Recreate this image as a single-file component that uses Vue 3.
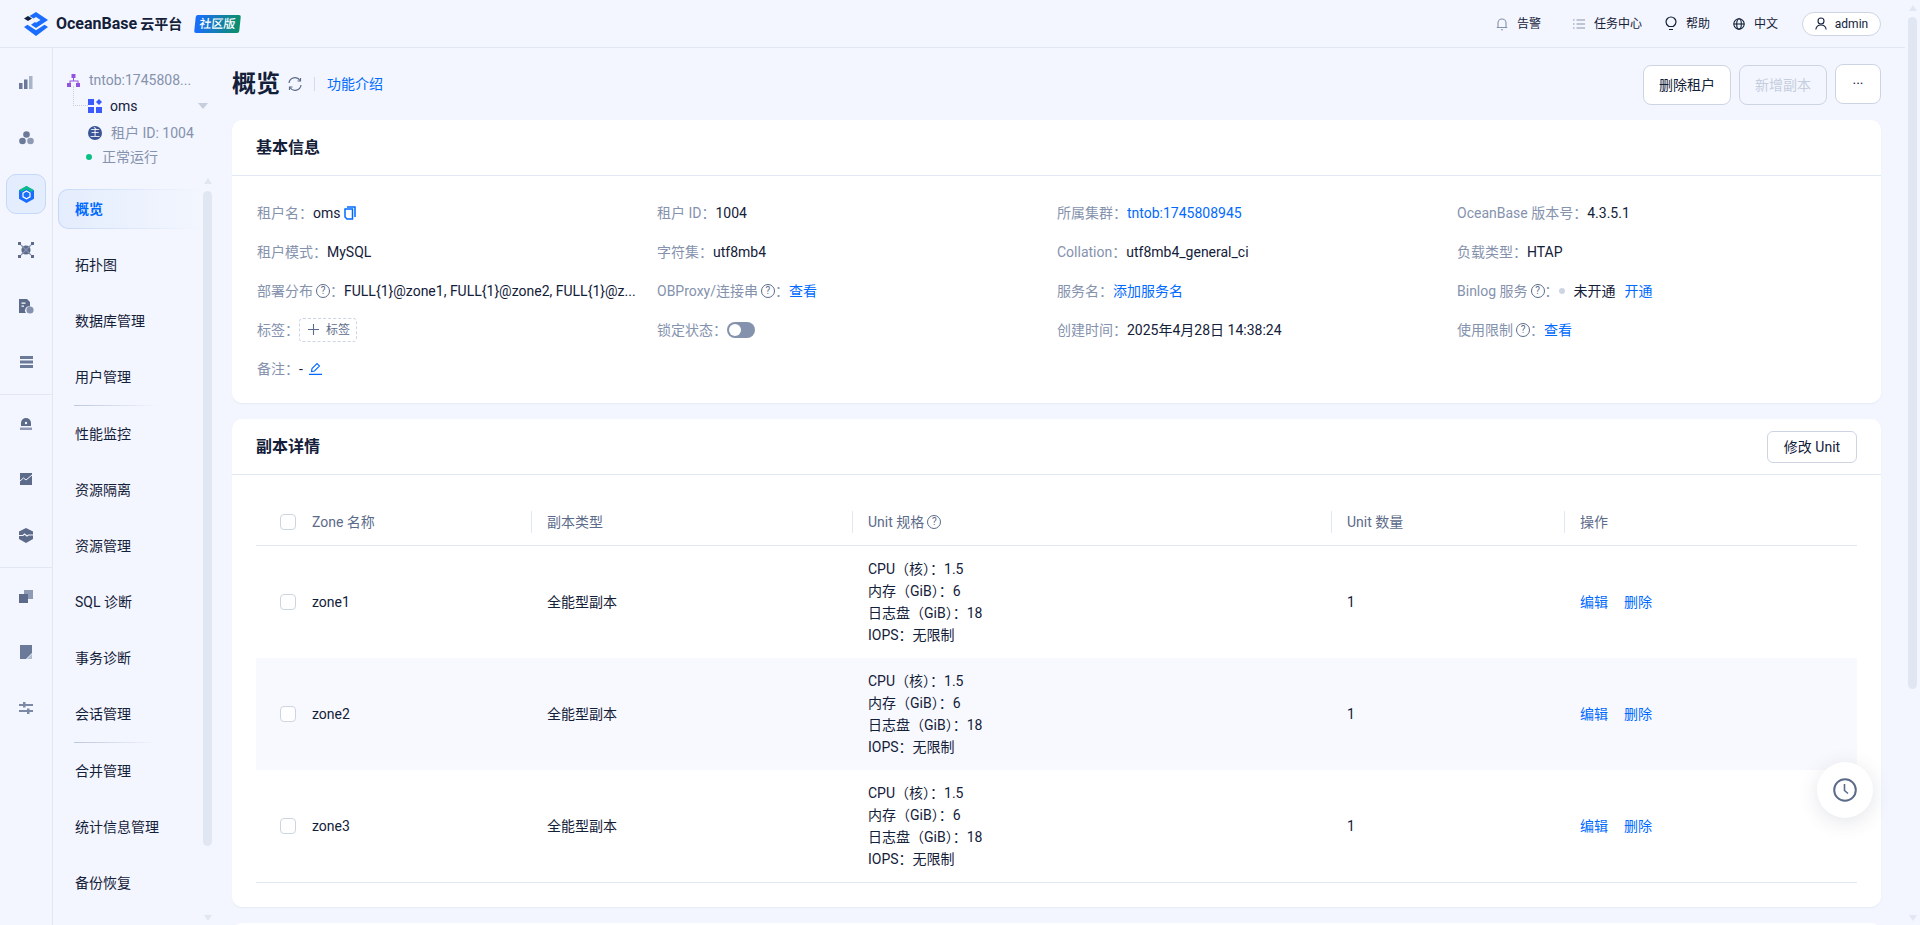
<template>
  <div class="page">
    <div class="shell">
      <header class="topbar">
        <div class="brand">
          <svg class="logo" width="24" height="24" viewBox="0 0 24 24">
            <path d="M12 0l12 8-12 8-5-3.300 4-2.700 1 .7L16.500 8 12 5 9.500 6.600 5.500 4z" fill="#1a6dff" />
            <path d="M0 6.500L4 4l4 2.500L4 9z" fill="#132039" />
            <path d="M0 15l3.500-2.200L12 18.300l8.500-5.500L24 15 12 24z" fill="#1a6dff" />
          </svg>
          <span class="brand-name">OceanBase<span class="brand-cn">云平台</span></span>
          <span class="edition">社区版</span>
        </div>
        <nav class="top-nav">
          <span class="top-item alarm">
            <svg width="12" height="14" viewBox="0 0 12 14" fill="none" stroke="#8592ad" stroke-width="1.100"><path d="M2 10.500V6a4 4 0 018 0v4.500zM.8 10.500h10.400M5 12.800h2" /></svg>
            告警
          </span>
          <span class="top-item tasks">
            <svg width="12" height="12" viewBox="0 0 12 12" stroke="#8592ad" stroke-width="1.100"><path d="M3.500 2H12M3.500 6H12M3.500 10H12M0 2h1.500M0 6h1.500M0 10h1.500" /></svg>
            任务中心
          </span>
          <span class="top-item help">
            <svg width="12" height="15" viewBox="0 0 12 15" fill="none" stroke="#132039" stroke-width="1.200"><path d="M3.800 10.500C2.500 9.500 1 8.200 1 6a5 5 0 0110 0c0 2.200-1.500 3.500-2.800 4.500zM4 13.500h4" /></svg>
            帮助
          </span>
          <span class="top-item lang">
            <svg width="12" height="12" viewBox="0 0 12 12" fill="none" stroke="#132039" stroke-width="1.100"><circle cx="6" cy="6" r="5.200" /><ellipse cx="6" cy="6" rx="2.300" ry="5.200" /><path d="M.8 6h10.400" /></svg>
            中文
          </span>
          <span class="user">
            <svg width="12" height="13" viewBox="0 0 12 13" fill="none" stroke="#132039" stroke-width="1.100"><circle cx="6" cy="4" r="3" /><path d="M.8 12.500C1.300 9.500 3.300 8 6 8s4.700 1.500 5.200 4.500" /></svg>
            admin
          </span>
        </nav>
      </header>

      <div class="body">
        <aside class="rail">
          <div class="rail-group">
            <span class="rail-icon">
              <svg width="14" height="13" viewBox="0 0 14 13"><rect x="0" y="7" width="3.500" height="6" fill="#6b7a99" /><rect x="5" y="3.500" width="3.500" height="9.500" fill="#6b7a99" /><rect x="10" y="0" width="3.500" height="13" fill="#aab4c8" /></svg>
            </span>
            <span class="rail-icon">
              <svg width="15" height="14" viewBox="0 0 15 14"><circle cx="7.500" cy="3.500" r="3.300" fill="#6b7a99" /><circle cx="3.500" cy="10" r="3.300" fill="#6b7a99" /><circle cx="11.500" cy="10" r="3.300" fill="#8f9bb5" /></svg>
            </span>
            <span class="rail-icon active">
              <svg width="15" height="17" viewBox="0 0 15 17"><path d="M7.500 0L15 4.200v8.500L7.500 17 0 12.700V4.200z" fill="#1a6dff" /><path d="M7.500 0L15 4.200l-2.500 1.500-5-2.800-5 2.800L0 4.200z" fill="#0ac185" /><path d="M7.500 5l3.500 2v3.800L7.500 12.800 4 10.800V7z" fill="none" stroke="#fff" stroke-width="1.200" /></svg>
            </span>
            <span class="rail-icon">
              <svg width="16" height="16" viewBox="0 0 16 16"><circle cx="8" cy="8" r="4.600" fill="#5c6b8a" /><path d="M3 3l10 10M13 3L3 13" stroke="#8592ad" stroke-width="1.200" /><g fill="#5c6b8a"><rect x="0" y="0" width="3" height="3" /><rect x="13" y="0" width="3" height="3" /><rect x="0" y="13" width="3" height="3" /><rect x="13" y="13" width="3" height="3" /></g></svg>
            </span>
            <span class="rail-icon">
              <svg width="15" height="15" viewBox="0 0 15 15"><path d="M0 0h8l3 3v4.500a4 4 0 00-4 6.500H0z" fill="#5c6b8a" /><rect x="2.500" y="3.500" width="4" height="1.300" fill="#f3f6fe" /><rect x="2.500" y="6.500" width="2.500" height="1.300" fill="#f3f6fe" /><circle cx="11" cy="11" r="3.600" fill="#8592ad" /></svg>
            </span>
            <span class="rail-icon">
              <svg width="13" height="12" viewBox="0 0 13 12"><rect width="13" height="3" fill="#6b7a99" /><rect y="4.500" width="13" height="3" fill="#6b7a99" /><rect y="9" width="13" height="3" fill="#6b7a99" /></svg>
            </span>
          </div>
          <div class="rail-group">
            <span class="rail-icon">
              <svg width="12" height="13" viewBox="0 0 12 13"><path d="M1 9V6a5 5 0 0110 0v3z" fill="#5c6b8a" /><circle cx="6" cy="6" r="1.200" fill="#f3f6fe" /><rect y="10.500" width="12" height="2.500" fill="#8f9bb5" /></svg>
            </span>
            <span class="rail-icon">
              <svg width="12" height="12" viewBox="0 0 12 12"><rect width="12" height="12" fill="#5c6b8a" /><path d="M0 8l3.500-3 2.500 2L12 2" fill="none" stroke="#f3f6fe" stroke-width="1" /></svg>
            </span>
            <span class="rail-icon">
              <svg width="14" height="15" viewBox="0 0 14 15"><path d="M7 0l7 3.500v7.500L7 15l-7-4V3.500z" fill="#5c6b8a" /><path d="M0 7.500h4l1.500-1.500 2.500 2 1.500-1h4.500" fill="none" stroke="#f3f6fe" stroke-width="1.100" /></svg>
            </span>
          </div>
          <div class="rail-group">
            <span class="rail-icon">
              <svg width="14" height="13" viewBox="0 0 14 13"><rect x="5" y="0" width="9" height="9" fill="#8f9bb5" /><rect x="0" y="4" width="9" height="9" fill="#5c6b8a" /></svg>
            </span>
            <span class="rail-icon">
              <svg width="12" height="14" viewBox="0 0 12 14"><path d="M0 0h12v8l-6 6H0z" fill="#6b7a99" /><path d="M12 9v5H7z" fill="#b4bdd0" /></svg>
            </span>
            <span class="rail-icon">
              <svg width="14" height="12" viewBox="0 0 14 12"><g fill="#7b89a6"><rect y="2" width="14" height="2" /><rect y="8" width="14" height="2" /><rect x="4" y="0" width="2.500" height="5.500" /><rect x="8" y="6.500" width="2.500" height="5.500" /></g></svg>
            </span>
          </div>
        </aside>

        <aside class="side">
          <div class="tenant">
            <div class="tenant-line cluster">
              <svg width="13" height="13" viewBox="0 0 13 13" fill="#9254de"><rect x="4.500" y="0" width="4" height="4" /><rect x="0" y="9" width="4" height="4" /><rect x="9" y="9" width="4" height="4" /><path d="M6 4h1v2.500h4.500V9h-1V7.500h-7V9h-1V6.500H6z" /></svg>
              <span>tntob:1745808...</span>
            </div>
            <div class="tenant-line name">
              <span class="dotted"></span>
              <svg width="14" height="14" viewBox="0 0 14 14" fill="#3b5bfd"><rect width="6" height="6" /><path d="M11 0l3 3-3 3-3-3z" /><rect y="8" width="6" height="6" /><rect x="8" y="8" width="6" height="6" /></svg>
              <span class="tenant-name">oms</span>
              <i class="caret"></i>
            </div>
            <div class="tenant-line tenant-id">
              <span class="mode-badge">主</span>
              <span>租户 ID: 1004</span>
            </div>
            <div class="tenant-line status">
              <i class="dot"></i>
              <span>正常运行</span>
            </div>
          </div>
          <div class="menu-wrap">
            <ul class="menu">
              <template v-for="item in menu" :key="item.label">
                <li class="menu-item" :class="{ active: item.active }">{{ item.label }}</li>
                <li v-if="item.divider" class="menu-divider"></li>
              </template>
            </ul>
            <div class="menu-scroll">
              <i class="arrow up"></i>
              <div class="thumb"></div>
              <i class="arrow down"></i>
            </div>
          </div>
        </aside>

        <main class="main">
          <div class="title-row">
            <h1>概览</h1>
            <svg class="refresh" width="14" height="14" viewBox="0 0 14 14" fill="none" stroke="#5c6b8a" stroke-width="1.200"><path d="M1 6a6 6 0 0111-2.500M13 8A6 6 0 012 10.500" /><path d="M12.500 1v3h-3M1.500 13v-3h3" /></svg>
            <i class="title-sep"></i>
            <a class="link intro">功能介绍</a>
            <div class="actions">
              <button class="btn">删除租户</button>
              <button class="btn disabled">新增副本</button>
              <button class="btn more">···</button>
            </div>
          </div>

          <section class="card">
            <div class="card-head"><h2>基本信息</h2></div>
            <div class="info">
              <div class="info-item"><span class="k">租户名：</span><span class="v">oms</span>
                <svg class="copy" width="12" height="14" viewBox="0 0 12 14" fill="none" stroke="#006aff" stroke-width="1.500"><path d="M3 1h8v10M1 3h7.500v10H3l-2-2z" /></svg>
              </div>
              <div class="info-item"><span class="k">租户 ID：</span><span class="v">1004</span></div>
              <div class="info-item"><span class="k">所属集群：</span><a class="link">tntob:1745808945</a></div>
              <div class="info-item"><span class="k">OceanBase 版本号：</span><span class="v">4.3.5.1</span></div>

              <div class="info-item"><span class="k">租户模式：</span><span class="v">MySQL</span></div>
              <div class="info-item"><span class="k">字符集：</span><span class="v">utf8mb4</span></div>
              <div class="info-item"><span class="k">Collation：</span><span class="v">utf8mb4_general_ci</span></div>
              <div class="info-item"><span class="k">负载类型：</span><span class="v">HTAP</span></div>

              <div class="info-item"><span class="k">部署分布<i class="q">?</i>：</span><span class="v">FULL{1}@zone1, FULL{1}@zone2, FULL{1}@z...</span></div>
              <div class="info-item"><span class="k">OBProxy/连接串<i class="q">?</i>：</span><a class="link">查看</a></div>
              <div class="info-item"><span class="k">服务名：</span><a class="link">添加服务名</a></div>
              <div class="info-item"><span class="k">Binlog 服务<i class="q">?</i>：</span><i class="grey-dot"></i><span class="v">未开通</span><a class="link open">开通</a></div>

              <div class="info-item"><span class="k">标签：</span>
                <span class="tag-add">
                  <svg width="11" height="11" viewBox="0 0 11 11" stroke="#5c6b8a" stroke-width="1.100"><path d="M5.500 0v11M0 5.500h11" /></svg>
                  标签
                </span>
              </div>
              <div class="info-item"><span class="k">锁定状态：</span><span class="switch"><i></i></span></div>
              <div class="info-item"><span class="k">创建时间：</span><span class="v">2025年4月28日 14:38:24</span></div>
              <div class="info-item"><span class="k">使用限制<i class="q">?</i>：</span><a class="link">查看</a></div>

              <div class="info-item"><span class="k">备注：</span><span class="v">-</span>
                <svg class="edit" width="13" height="13" viewBox="0 0 13 13" fill="none" stroke="#006aff" stroke-width="1.100"><path d="M2.500 9.500l.5-3L8 1.500l2.500 2.500-5 5zM0 12.400h13" /></svg>
              </div>
            </div>
          </section>

          <section class="card">
            <div class="card-head">
              <h2>副本详情</h2>
              <button class="btn small">修改 Unit</button>
            </div>
            <div class="table-wrap">
              <div class="tr thead">
                <div class="td check"><i class="box"></i></div>
                <div class="td">Zone 名称</div>
                <div class="td sep">副本类型</div>
                <div class="td sep">Unit 规格<i class="q">?</i></div>
                <div class="td sep">Unit 数量</div>
                <div class="td sep">操作</div>
              </div>
              <div v-for="(zone, i) in zones" :key="zone" class="tr row" :class="{ stripe: i === 1 }">
                <div class="td check"><i class="box"></i></div>
                <div class="td">{{ zone }}</div>
                <div class="td">全能型副本</div>
                <div class="td spec">
                  <div>CPU（核）：1.5</div>
                  <div>内存（GiB）：6</div>
                  <div>日志盘（GiB）：18</div>
                  <div>IOPS：无限制</div>
                </div>
                <div class="td">1</div>
                <div class="td ops"><a class="link">编辑</a><a class="link">删除</a></div>
              </div>
            </div>
          </section>

          <section class="card next"></section>

          <button class="float-btn">
            <svg width="24" height="24" viewBox="0 0 24 24" fill="none" stroke="#5c6b8a" stroke-width="2"><circle cx="12" cy="12" r="10.800" /><path d="M11.500 6v6.500l3.500 3" stroke-width="1.600" /></svg>
          </button>
        </main>
      </div>
    </div>

    <div class="page-scroll">
      <i class="arrow up"></i>
      <div class="thumb"></div>
      <i class="arrow down"></i>
    </div>
  </div>
</template>

<script setup>
const menu = [
  { label: "概览", active: true },
  { label: "拓扑图" },
  { label: "数据库管理" },
  { label: "用户管理", divider: true },
  { label: "性能监控" },
  { label: "资源隔离" },
  { label: "资源管理" },
  { label: "SQL 诊断" },
  { label: "事务诊断" },
  { label: "会话管理", divider: true },
  { label: "合并管理" },
  { label: "统计信息管理" },
  { label: "备份恢复" },
];

const zones = ["zone1", "zone2", "zone3"];
</script>

<style>
html,
body {
  margin: 0;
  height: 100%;
  overflow: hidden;
}
</style>

<style scoped>
.page {
  display: flex;
  width: 1920px;
  height: 925px;
  overflow: hidden;
  background: #f3f6fe;
  color: #132039;
  font-family: Roboto, "Noto Sans CJK SC", sans-serif;
  font-size: 14px;
  line-height: 22px;
}

.shell {
  flex: 1;
  min-width: 0;
  display: flex;
  flex-direction: column;
}

/* top bar */
.topbar {
  flex: none;
  height: 47px;
  border-bottom: 1px solid #e2e8f3;
  display: flex;
  align-items: center;
  justify-content: space-between;
  padding: 0 24px;
}

.brand {
  display: flex;
  align-items: center;
}

.logo {
  margin-right: 8px;
}

.brand-name {
  font-size: 16px;
  font-weight: 700;
}

.brand-cn {
  font-size: 14px;
  margin-left: 3px;
}

.edition {
  margin-left: 13px;
  width: 45px;
  height: 18px;
  line-height: 18px;
  text-align: center;
  color: #fff;
  font-size: 12px;
  font-weight: 500;
  border-radius: 2px;
  transform: skewX(-6deg);
  background: linear-gradient(90deg, #1a6dff, #0b8f6a);
}

.top-nav {
  display: flex;
  align-items: center;
  font-size: 12px;
}

.top-item {
  display: flex;
  align-items: center;
  gap: 9px;
}

.tasks {
  margin-left: 32px;
}

.help {
  margin-left: 23px;
}

.lang {
  margin-left: 23px;
}

.user {
  margin-left: 24px;
  width: 79px;
  height: 24px;
  box-sizing: border-box;
  border: 1px solid #cdd5e4;
  border-radius: 12px;
  background: #fff;
  display: flex;
  align-items: center;
  justify-content: center;
  gap: 8px;
}

/* left side */
.body {
  flex: 1;
  min-height: 0;
  display: flex;
}

.rail {
  flex: none;
  width: 52px;
  border-right: 1px solid #e2e8f3;
  padding-top: 14px;
}

.rail-group {
  padding-bottom: 12px;
  border-bottom: 1px solid #e2e8f3;
  margin-bottom: 8px;
}

.rail-group:last-child {
  border-bottom: 0;
}

.rail-icon {
  display: flex;
  align-items: center;
  justify-content: center;
  width: 40px;
  height: 40px;
  margin: 0 0 16px 6px;
  box-sizing: border-box;
  border-radius: 10px;
  border: 1px solid transparent;
}

.rail-icon:last-child {
  margin-bottom: 0;
}

.rail-icon.active {
  background: #e4edfd;
  border-color: #c6d8f8;
}

.side {
  flex: none;
  width: 179px;
  display: flex;
  flex-direction: column;
  min-height: 0;
}

.tenant {
  flex: none;
  height: 123px;
  padding: 21px 0 0 14px;
  box-sizing: border-box;
  color: #8592ad;
}

.tenant-line {
  display: flex;
  align-items: center;
  position: relative;
}

.cluster {
  gap: 9px;
  height: 22px;
}

.name {
  height: 30px;
  padding-left: 21px;
  gap: 8px;
}

.dotted {
  position: absolute;
  left: 6px;
  top: -5px;
  width: 14px;
  height: 19px;
  border-left: 1px dotted #c8d0e0;
  border-bottom: 1px dotted #c8d0e0;
}

.tenant-name {
  color: #132039;
}

.caret {
  margin-left: 52px;
  border: 5px solid transparent;
  border-top: 6px solid #c5cede;
  border-bottom: 0;
}

.tenant-id {
  height: 22px;
  margin-top: 1px;
  padding-left: 21px;
  gap: 9px;
}

.mode-badge {
  width: 14px;
  height: 14px;
  border-radius: 50%;
  background: #3a5495;
  color: #fff;
  font-size: 10px;
  line-height: 14px;
  text-align: center;
}

.status {
  height: 22px;
  margin-top: 2px;
  padding-left: 19px;
  gap: 10px;
}

.dot {
  width: 6px;
  height: 6px;
  border-radius: 50%;
  background: #0ac185;
}

.menu-wrap {
  flex: 1;
  min-height: 0;
  display: flex;
  padding: 0 20px 0 5px;
}

.menu {
  flex: 1;
  list-style: none;
  margin: 0;
  padding: 18px 0 0;
  min-width: 0;
}

.menu-item {
  height: 40px;
  line-height: 38px;
  box-sizing: border-box;
  padding-left: 16px;
  margin-bottom: 16px;
  border: 1px solid transparent;
  border-right: 0;
}

.menu-item.active {
  color: #006aff;
  font-weight: 700;
  border-radius: 10px 0 0 10px;
  background:
    linear-gradient(90deg, #e4edfd, #f3f6fe) padding-box,
    linear-gradient(90deg, #c6d8f8, #f3f6fe) border-box;
}

.menu-divider {
  height: 1px;
  margin: -8px 0 8px 16px;
  width: 84px;
  background: linear-gradient(90deg, #bcc8e0, #f3f6fe);
}

.menu-scroll {
  flex: none;
  width: 9px;
  margin-top: 7px;
  display: flex;
  flex-direction: column;
  align-items: center;
}

.menu-scroll .thumb {
  height: 655px;
  margin: 7px 0 auto;
}

.menu-scroll .down {
  margin-bottom: 4px;
}

.thumb {
  width: 9px;
  background: #e1e7f2;
  border-radius: 5px;
}

.arrow {
  display: block;
  width: 0;
  height: 0;
  border: 4.500px solid transparent;
}

.arrow.up {
  border-top: 0;
  border-bottom: 6px solid #e1e7f2;
}

.arrow.down {
  border-bottom: 0;
  border-top: 6px solid #e1e7f2;
}

/* main */
.main {
  flex: 1;
  min-width: 0;
  padding-right: 24px;
  position: relative;
}

.title-row {
  height: 72px;
  display: flex;
  align-items: center;
}

h1 {
  margin: 0;
  font-size: 24px;
  line-height: 32px;
  font-weight: 700;
}

.refresh {
  margin-left: 8px;
}

.title-sep {
  width: 1px;
  height: 14px;
  margin: 0 12px 0 12px;
  background: #d5dbe8;
}

.link {
  color: #006aff;
}

.actions {
  margin-left: auto;
  margin-top: 2px;
  display: flex;
  align-items: flex-start;
  gap: 8px;
}

.btn {
  width: 88px;
  height: 40px;
  box-sizing: border-box;
  border: 1px solid #cdd5e4;
  border-radius: 8px;
  background: #fff;
  color: #132039;
  font: inherit;
  padding: 0;
}

.btn.disabled {
  background: transparent;
  color: #c5cede;
}

.btn.more {
  width: 46px;
  margin-top: -1px;
}

.btn.small {
  width: 90px;
  height: 32px;
  border-radius: 6px;
}

.card {
  background: #fff;
  border-radius: 10px;
  margin-bottom: 16px;
  box-shadow: 0 1px 2px rgba(54, 69, 99, 0.06);
}

.card-head {
  height: 56px;
  box-sizing: border-box;
  border-bottom: 1px solid #e2e8f3;
  display: flex;
  align-items: center;
  justify-content: space-between;
  padding: 0 24px;
}

h2 {
  margin: 0;
  font-size: 16px;
  font-weight: 700;
}

.info {
  display: grid;
  grid-template-columns: repeat(4, 400px);
  grid-auto-rows: 39px;
  padding: 17px 0 15px 25px;
}

.info-item {
  display: flex;
  align-items: center;
  white-space: nowrap;
}

.k {
  color: #8592ad;
}

.q {
  display: inline-block;
  width: 14px;
  height: 14px;
  box-sizing: border-box;
  margin-left: 3px;
  border: 1px solid #5c6b8a;
  border-radius: 50%;
  color: #5c6b8a;
  font-size: 10px;
  font-style: normal;
  line-height: 12px;
  text-align: center;
  vertical-align: 2px;
}

.copy {
  margin-left: 3px;
}

.edit {
  margin-left: 6px;
}

.grey-dot {
  width: 6px;
  height: 6px;
  border-radius: 50%;
  background: #cdd5e4;
  margin: 0 9px 0 0;
}

.open {
  margin-left: 9px;
}

.tag-add {
  display: flex;
  align-items: center;
  gap: 7px;
  height: 24px;
  box-sizing: border-box;
  padding: 0 6px 0 8px;
  border: 1px dashed #cdd5e4;
  border-radius: 4px;
  font-size: 12px;
  color: #5c6b8a;
}

.switch {
  width: 28px;
  height: 16px;
  border-radius: 8px;
  background: #8592ad;
  padding: 2px;
  box-sizing: border-box;
}

.switch i {
  display: block;
  width: 12px;
  height: 12px;
  border-radius: 50%;
  background: #fff;
}

.table-wrap {
  padding: 24px;
}

.tr {
  display: grid;
  grid-template-columns: 40px 235px 321px 479px 233px 1fr;
}

.thead {
  height: 47px;
  box-sizing: border-box;
  border-bottom: 1px solid #e2e8f3;
  color: #5c6b8a;
  align-items: center;
}

.row {
  height: 112px;
  align-items: center;
  box-sizing: border-box;
}

.row:last-child {
  height: 113px;
  border-bottom: 1px solid #e2e8f3;
}

.stripe {
  background: #f8f9fe;
}

.td {
  padding-left: 16px;
}

.td.check {
  padding-left: 24px;
  display: flex;
}

.thead .sep {
  border-left: 1px solid #e2e8f3;
  padding-left: 15px;
  height: 22px;
}

.box {
  flex: none;
  width: 16px;
  height: 16px;
  box-sizing: border-box;
  border: 1px solid #cdd5e4;
  border-radius: 4px;
  background: #fff;
}

.ops {
  display: flex;
  gap: 16px;
}

.card.next {
  height: 40px;
  margin: 0;
}

.float-btn {
  position: absolute;
  left: 1585px;
  top: 714px;
  width: 56px;
  height: 56px;
  padding: 0;
  border: 0;
  border-radius: 50%;
  background: #fff;
  box-shadow: 0 4px 20px rgba(54, 69, 99, 0.14);
  display: flex;
  align-items: center;
  justify-content: center;
}

/* page scrollbar */
.page-scroll {
  flex: none;
  width: 15px;
  padding: 5px 0 4px;
  box-sizing: border-box;
  display: flex;
  flex-direction: column;
  align-items: center;
}

.page-scroll .thumb {
  height: 672px;
  margin: 6px 0 auto;
}
</style>
